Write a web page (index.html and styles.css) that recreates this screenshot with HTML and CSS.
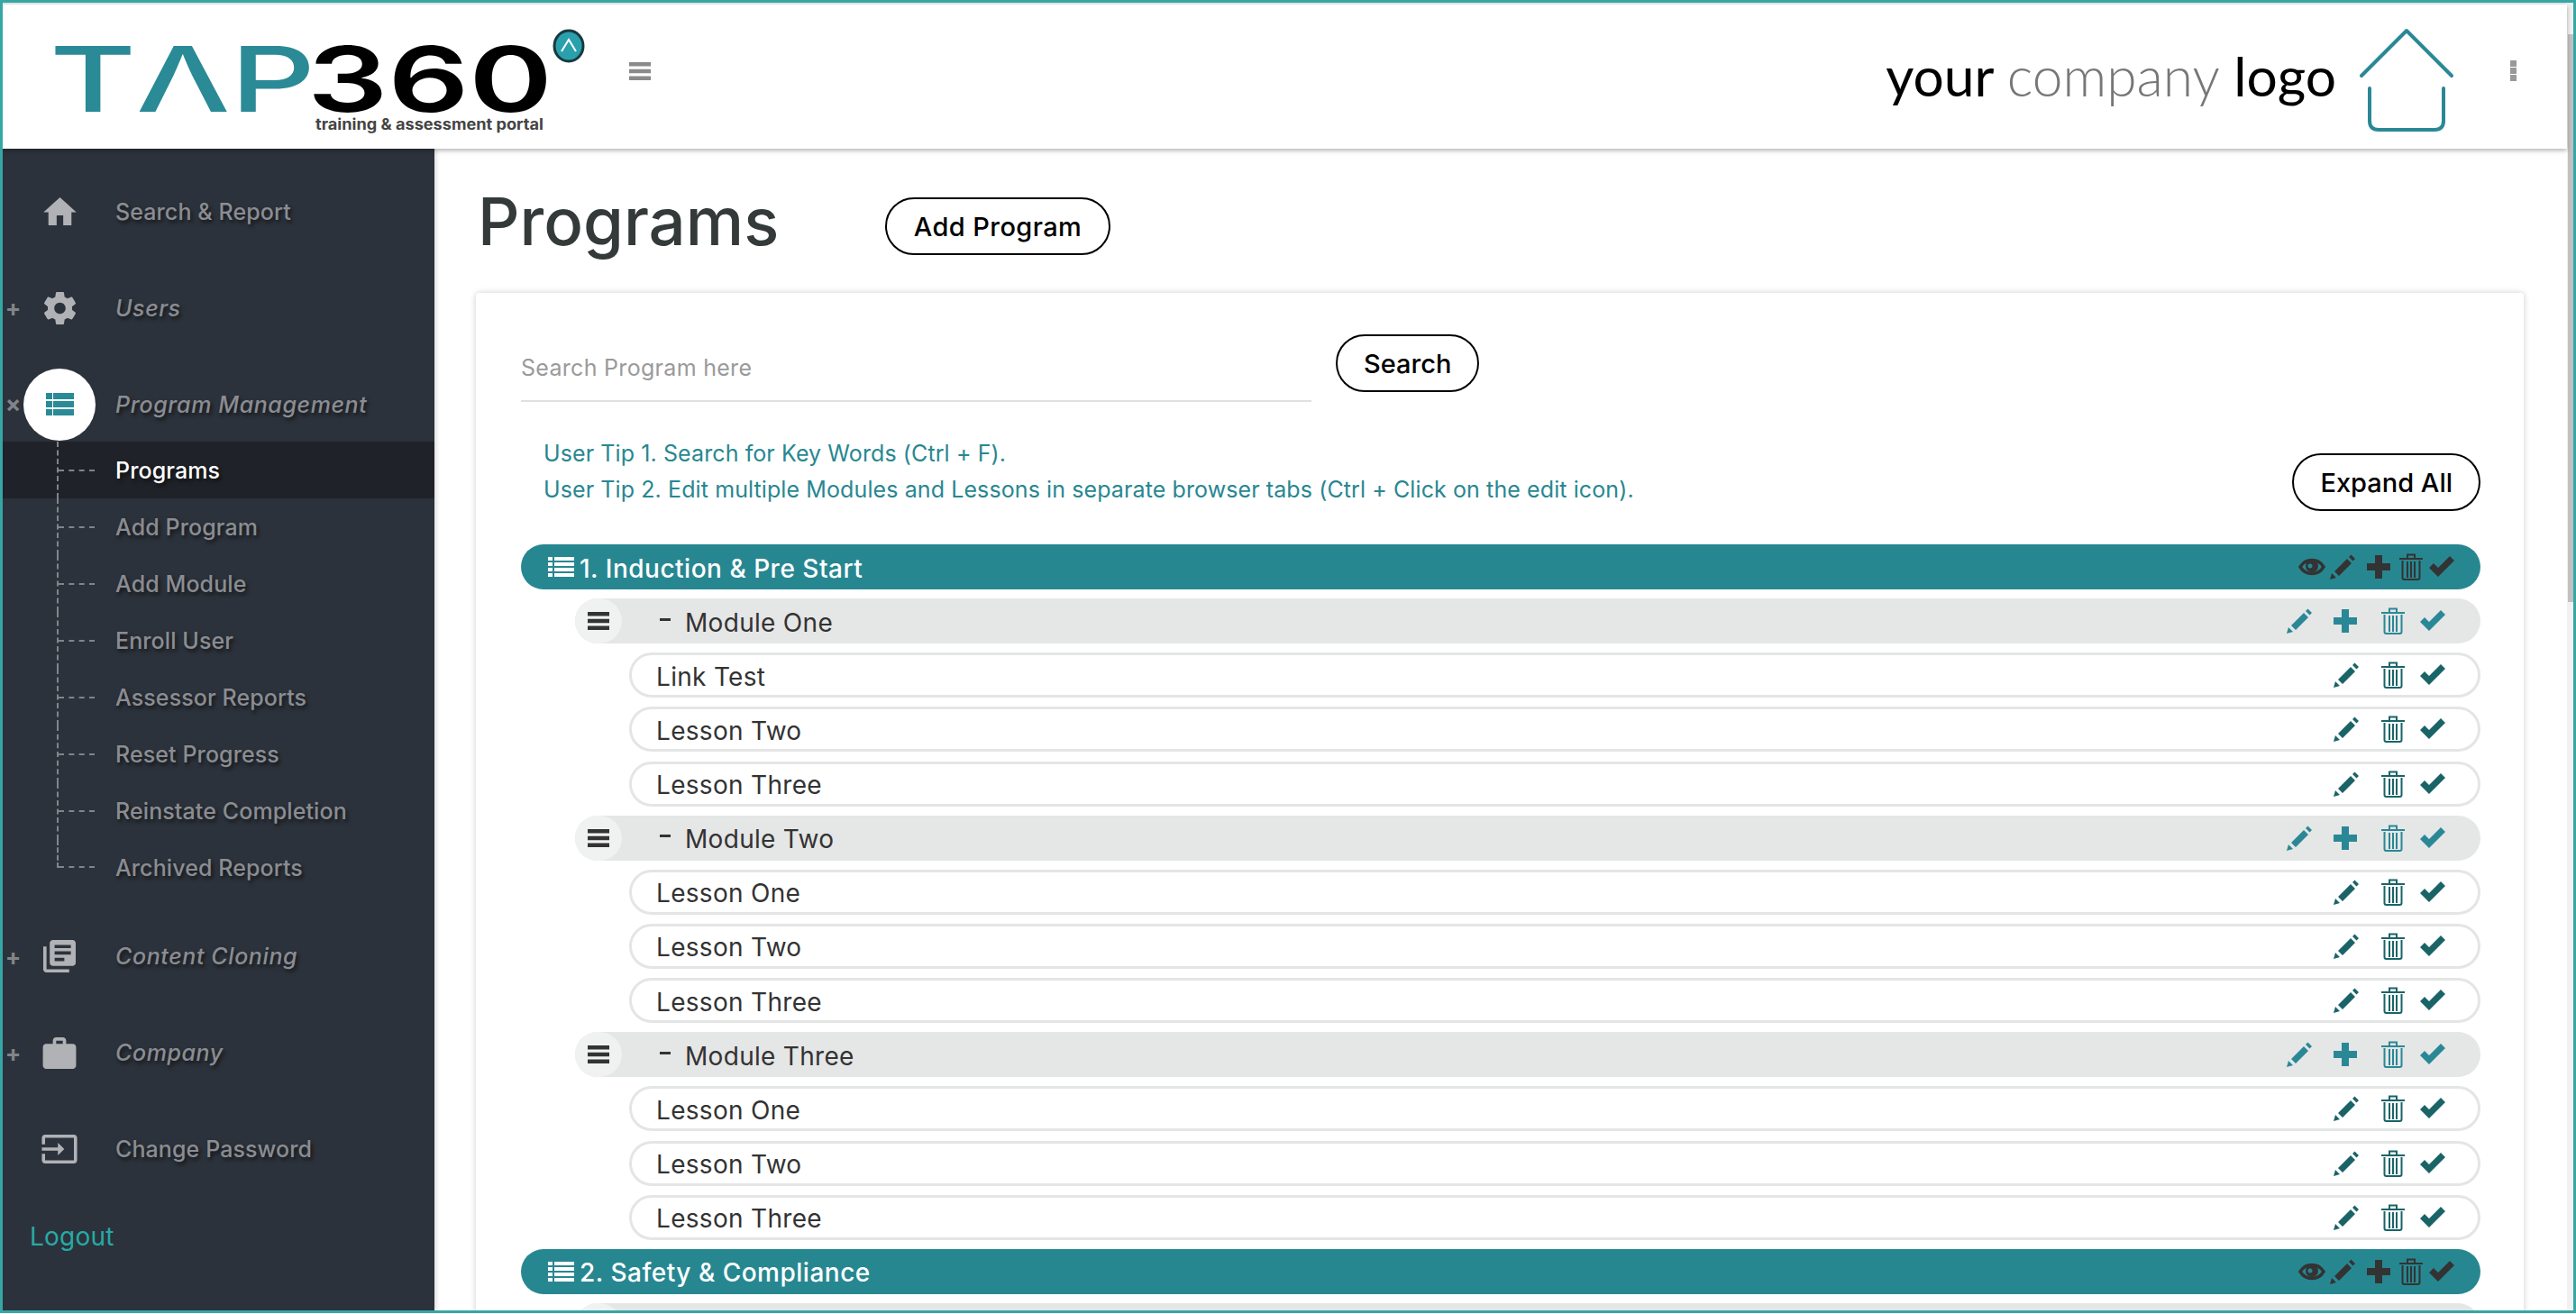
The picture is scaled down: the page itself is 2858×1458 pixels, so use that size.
FILE: index.html
```html
<!DOCTYPE html>
<html>
    <head>
        <title>TAP360 Programs</title>
        <link rel="stylesheet" href="styles.css">
    </head>
    <body>
        <!-- Shared icons -->
        <svg class="icon-defs" width="0" height="0">
            <symbol id="i-trash" viewBox="0 0 26 30">
                <path d="M9 5V1.5h8V5M0 6h26M3.5 8v19a2 2 0 0 0 2 2h15a2 2 0 0 0 2-2V8M9 9v18M13 9v18M17 9v18" fill="none" stroke="currentColor" stroke-width="2"/>
            </symbol>
            <symbol id="i-pencil" viewBox="0 0 28 28">
                <path d="M0 28l2-7 5 5zM5 19L19 5l5 5-14 14zM21 3l2.5-2.5L28 5l-2.500 2.500z" fill="currentColor"/>
            </symbol>
            <symbol id="i-check" viewBox="0 0 28 24">
                <path d="M0 13l5-5 5 5L23 0l5 5-18 18z" fill="currentColor"/>
            </symbol>
            <symbol id="i-plus" viewBox="0 0 26 26">
                <path d="M9 0h8v9h9v8h-9v9H9v-9H0V9h9z" fill="currentColor"/>
            </symbol>
            <symbol id="i-eye" viewBox="0 0 30 24">
                <path d="M2 12C8 2 22 2 28 12C22 22 8 22 2 12Z" fill="none" stroke="currentColor" stroke-width="3.500"/>
                <circle cx="15" cy="11" r="7" fill="currentColor"/>
                <circle cx="13" cy="11" r="2.500" fill="#278791"/>
            </symbol>
            <symbol id="i-list" viewBox="0 0 29 22">
                <path d="M0 0h5v4H0zM7 0h22v4H7zM0 6h5v4H0zM7 6h22v4H7zM0 12h5v4H0zM7 12h22v4H7zM0 18h5v4H0zM7 18h22v4H7z" fill="currentColor"/>
            </symbol>
            <symbol id="i-bars" viewBox="0 0 24 20">
                <path d="M0 0h24v4.500H0zM0 7.700h24v4.500H0zM0 15.500h24V20H0z" fill="currentColor"/>
            </symbol>
        </svg>

        <div class="frame">
            <div class="page">
                <header class="topbar">
                    <svg class="logo" width="607" height="144" viewBox="0 0 607 144">
                        <text class="logo-tap" x="2" y="111" textLength="295" lengthAdjust="spacingAndGlyphs">TΛP</text>
                        <text class="logo-num" x="288" y="111" textLength="272" lengthAdjust="spacingAndGlyphs">360</text>
                        <text class="logo-tag" x="297" y="131" textLength="253" lengthAdjust="spacingAndGlyphs">training &amp; assessment portal</text>
                        <ellipse cx="578" cy="38" rx="16" ry="17" fill="#2ba0ad" stroke="#17393f" stroke-width="3"/>
                        <path d="M570 44l8-13 8 13" fill="none" stroke="#fff" stroke-width="2"/>
                    </svg>
                    <button class="menu-toggle" aria-label="Menu">
                        <svg width="24" height="20"><use href="#i-bars"/></svg>
                    </button>
                    <div class="company-logo">
                        <span class="company-text">your <span class="company-mid">company</span> logo</span>
                        <svg width="108" height="120" viewBox="0 0 108 120">
                            <path d="M4 54L54 4l50 50M13 68v36q0 10 10 10h62q10 0 10-10V68" fill="none" stroke="#2a8896" stroke-width="4" stroke-linecap="round" stroke-linejoin="round"/>
                        </svg>
                    </div>
                    <div class="kebab"><i></i><i></i><i></i></div>
                </header>

                <div class="workspace">
                    <nav class="sidebar">
                        <a class="nav-item">
                            <span class="nav-toggle"></span>
                            <span class="nav-icon"><svg width="37" height="31" viewBox="2 3 20 17"><path d="M10 20v-6h4v6h5v-8h3L12 3 2 12h3v8z" fill="currentColor"/></svg></span>
                            <span class="nav-label">Search &amp; Report</span>
                        </a>
                        <a class="nav-item group">
                            <span class="nav-toggle">+</span>
                            <span class="nav-icon"><svg width="37" height="36" viewBox="2.300 2 19.400 20"><path d="M19.430 12.980c.04-.32.07-.64.07-.98s-.03-.66-.07-.98l2.110-1.650c.19-.15.24-.42.12-.64l-2-3.460c-.12-.22-.39-.3-.61-.22l-2.490 1c-.52-.4-1.080-.73-1.690-.98l-.38-2.650C14.460 2.180 14.250 2 14 2h-4c-.25 0-.46.18-.49.42l-.38 2.650c-.61.25-1.170.59-1.690.98l-2.490-1c-.23-.09-.49 0-.61.22l-2 3.460c-.13.22-.07.49.12.64l2.110 1.650c-.04.32-.07.65-.07.98s.03.66.07.98l-2.110 1.650c-.19.15-.24.42-.12.64l2 3.460c.12.22.39.3.61.22l2.490-1c.52.4 1.080.73 1.690.98l.38 2.650c.03.24.24.42.49.42h4c.25 0 .46-.18.49-.42l.38-2.650c.61-.25 1.170-.59 1.690-.98l2.490 1c.23.09.49 0 .61-.22l2-3.460c.12-.22.07-.49-.12-.64l-2.110-1.650zM12 15.500c-1.930 0-3.500-1.570-3.500-3.500s1.570-3.500 3.500-3.500 3.500 1.570 3.500 3.500-1.570 3.500-3.500 3.500z" fill="currentColor"/></svg></span>
                            <span class="nav-label">Users</span>
                        </a>
                        <a class="nav-item group open">
                            <span class="nav-toggle">×</span>
                            <span class="nav-icon"><svg width="31" height="25" viewBox="0 0 31 25"><path d="M0 0h7v7H0zM8 0h23v7H8zM0 9h7v7H0zM8 9h23v7H8zM0 18h7v7H0zM8 18h23v7H8z" fill="currentColor"/></svg></span>
                            <span class="nav-label">Program Management</span>
                        </a>
                        <div class="submenu">
                            <a class="sub-item active"><span class="branch"></span>Programs</a>
                            <a class="sub-item"><span class="branch"></span>Add Program</a>
                            <a class="sub-item"><span class="branch"></span>Add Module</a>
                            <a class="sub-item"><span class="branch"></span>Enroll User</a>
                            <a class="sub-item"><span class="branch"></span>Assessor Reports</a>
                            <a class="sub-item"><span class="branch"></span>Reset Progress</a>
                            <a class="sub-item"><span class="branch"></span>Reinstate Completion</a>
                            <a class="sub-item last"><span class="branch"></span>Archived Reports</a>
                        </div>
                        <a class="nav-item group">
                            <span class="nav-toggle">+</span>
                            <span class="nav-icon"><svg width="38" height="36" viewBox="2 2 20 20"><path d="M4 6H2v14c0 1.100.9 2 2 2h14v-2H4V6zm16-4H8c-1.100 0-2 .9-2 2v12c0 1.100.9 2 2 2h12c1.100 0 2-.9 2-2V4c0-1.100-.9-2-2-2zm-1 9H9V9h10v2zm-4 4H9v-2h6v2zm4-8H9V5h10v2z" fill="currentColor"/></svg></span>
                            <span class="nav-label">Content Cloning</span>
                        </a>
                        <a class="nav-item group">
                            <span class="nav-toggle">+</span>
                            <span class="nav-icon"><svg width="38" height="35" viewBox="2 2 20 19"><path d="M20 6h-4V4c0-1.110-.89-2-2-2h-4c-1.110 0-2 .89-2 2v2H4c-1.110 0-1.990.89-1.990 2L2 19c0 1.110.89 2 2 2h16c1.110 0 2-.89 2-2V8c0-1.110-.89-2-2-2zm-6 0h-4V4h4v2z" fill="currentColor"/></svg></span>
                            <span class="nav-label">Company</span>
                        </a>
                        <a class="nav-item">
                            <span class="nav-toggle"></span>
                            <span class="nav-icon"><svg width="40" height="32" viewBox="1 3 22 18"><path d="M21 3.010H3c-1.100 0-2 .9-2 2V9h2V4.990h18v14.030H3V15H1v4.010c0 1.100.9 1.980 2 1.980h18c1.100 0 2-.88 2-1.980v-14c0-1.110-.9-2-2-2zM11 16l4-4-4-4v3H1v2h10v3z" fill="currentColor"/></svg></span>
                            <span class="nav-label">Change Password</span>
                        </a>
                        <a class="logout">Logout</a>
                    </nav>

                    <main class="content">
                        <div class="title-row">
                            <h1>Programs</h1>
                            <button class="pill add-program">Add Program</button>
                        </div>

                        <section class="card">
                            <div class="search-row">
                                <input class="search-input" type="text" placeholder="Search Program here">
                                <button class="pill">Search</button>
                            </div>

                            <div class="tips-row">
                                <div class="tips">
                                    <p>User Tip 1. Search for Key Words (Ctrl + F).</p>
                                    <p>User Tip 2. Edit multiple Modules and Lessons in separate browser tabs (Ctrl + Click on the edit icon).</p>
                                </div>
                                <button class="pill expand">Expand All</button>
                            </div>

                            <div class="row program">
                                <svg class="list-icon" width="29" height="22"><use href="#i-list"/></svg>
                                <span class="label">1. Induction &amp; Pre Start</span>
                                <div class="actions">
                                    <svg width="30" height="24"><use href="#i-eye"/></svg>
                                    <svg width="28" height="28"><use href="#i-pencil"/></svg>
                                    <svg width="26" height="26"><use href="#i-plus"/></svg>
                                    <svg width="26" height="30"><use href="#i-trash"/></svg>
                                    <svg width="28" height="24"><use href="#i-check"/></svg>
                                </div>
                            </div>

                            <div class="row module">
                                <span class="handle"><svg width="24" height="20"><use href="#i-bars"/></svg></span>
                                <span class="dash"></span>
                                <span class="label">Module One</span>
                                <div class="actions">
                                    <svg width="28" height="28"><use href="#i-pencil"/></svg>
                                    <svg width="26" height="26"><use href="#i-plus"/></svg>
                                    <svg width="26" height="30"><use href="#i-trash"/></svg>
                                    <svg width="28" height="24"><use href="#i-check"/></svg>
                                </div>
                            </div>
                            <div class="row lesson">
                                <span class="label">Link Test</span>
                                <div class="actions">
                                    <svg width="28" height="28"><use href="#i-pencil"/></svg>
                                    <svg width="26" height="30"><use href="#i-trash"/></svg>
                                    <svg width="28" height="24"><use href="#i-check"/></svg>
                                </div>
                            </div>
                            <div class="row lesson">
                                <span class="label">Lesson Two</span>
                                <div class="actions">
                                    <svg width="28" height="28"><use href="#i-pencil"/></svg>
                                    <svg width="26" height="30"><use href="#i-trash"/></svg>
                                    <svg width="28" height="24"><use href="#i-check"/></svg>
                                </div>
                            </div>
                            <div class="row lesson">
                                <span class="label">Lesson Three</span>
                                <div class="actions">
                                    <svg width="28" height="28"><use href="#i-pencil"/></svg>
                                    <svg width="26" height="30"><use href="#i-trash"/></svg>
                                    <svg width="28" height="24"><use href="#i-check"/></svg>
                                </div>
                            </div>

                            <div class="row module">
                                <span class="handle"><svg width="24" height="20"><use href="#i-bars"/></svg></span>
                                <span class="dash"></span>
                                <span class="label">Module Two</span>
                                <div class="actions">
                                    <svg width="28" height="28"><use href="#i-pencil"/></svg>
                                    <svg width="26" height="26"><use href="#i-plus"/></svg>
                                    <svg width="26" height="30"><use href="#i-trash"/></svg>
                                    <svg width="28" height="24"><use href="#i-check"/></svg>
                                </div>
                            </div>
                            <div class="row lesson">
                                <span class="label">Lesson One</span>
                                <div class="actions">
                                    <svg width="28" height="28"><use href="#i-pencil"/></svg>
                                    <svg width="26" height="30"><use href="#i-trash"/></svg>
                                    <svg width="28" height="24"><use href="#i-check"/></svg>
                                </div>
                            </div>
                            <div class="row lesson">
                                <span class="label">Lesson Two</span>
                                <div class="actions">
                                    <svg width="28" height="28"><use href="#i-pencil"/></svg>
                                    <svg width="26" height="30"><use href="#i-trash"/></svg>
                                    <svg width="28" height="24"><use href="#i-check"/></svg>
                                </div>
                            </div>
                            <div class="row lesson">
                                <span class="label">Lesson Three</span>
                                <div class="actions">
                                    <svg width="28" height="28"><use href="#i-pencil"/></svg>
                                    <svg width="26" height="30"><use href="#i-trash"/></svg>
                                    <svg width="28" height="24"><use href="#i-check"/></svg>
                                </div>
                            </div>

                            <div class="row module">
                                <span class="handle"><svg width="24" height="20"><use href="#i-bars"/></svg></span>
                                <span class="dash"></span>
                                <span class="label">Module Three</span>
                                <div class="actions">
                                    <svg width="28" height="28"><use href="#i-pencil"/></svg>
                                    <svg width="26" height="26"><use href="#i-plus"/></svg>
                                    <svg width="26" height="30"><use href="#i-trash"/></svg>
                                    <svg width="28" height="24"><use href="#i-check"/></svg>
                                </div>
                            </div>
                            <div class="row lesson">
                                <span class="label">Lesson One</span>
                                <div class="actions">
                                    <svg width="28" height="28"><use href="#i-pencil"/></svg>
                                    <svg width="26" height="30"><use href="#i-trash"/></svg>
                                    <svg width="28" height="24"><use href="#i-check"/></svg>
                                </div>
                            </div>
                            <div class="row lesson">
                                <span class="label">Lesson Two</span>
                                <div class="actions">
                                    <svg width="28" height="28"><use href="#i-pencil"/></svg>
                                    <svg width="26" height="30"><use href="#i-trash"/></svg>
                                    <svg width="28" height="24"><use href="#i-check"/></svg>
                                </div>
                            </div>
                            <div class="row lesson">
                                <span class="label">Lesson Three</span>
                                <div class="actions">
                                    <svg width="28" height="28"><use href="#i-pencil"/></svg>
                                    <svg width="26" height="30"><use href="#i-trash"/></svg>
                                    <svg width="28" height="24"><use href="#i-check"/></svg>
                                </div>
                            </div>

                            <div class="row program">
                                <svg class="list-icon" width="29" height="22"><use href="#i-list"/></svg>
                                <span class="label">2. Safety &amp; Compliance</span>
                                <div class="actions">
                                    <svg width="30" height="24"><use href="#i-eye"/></svg>
                                    <svg width="28" height="28"><use href="#i-pencil"/></svg>
                                    <svg width="26" height="26"><use href="#i-plus"/></svg>
                                    <svg width="26" height="30"><use href="#i-trash"/></svg>
                                    <svg width="28" height="24"><use href="#i-check"/></svg>
                                </div>
                            </div>
                            <div class="row module">
                                <span class="handle"></span>
                            </div>
                        </section>
                    </main>
                </div>
            </div>

            <div class="scrollbar"><div class="scroll-thumb"></div></div>
        </div>
    </body>
</html>
```

FILE: styles.css
```css
/* Page frame */
html, body {
    margin: 0;
    height: 100%;
    overflow: hidden;
}

body {
    font-family: 'Inter', 'Noto Sans', sans-serif;
    background-color: rgb(255, 255, 255);
}

.icon-defs {
    display: block;
    height: 0;
}

.frame {
    display: flex;
    box-sizing: border-box;
    height: 1457px;
    border: 3px solid rgb(53, 167, 165);
    overflow: hidden;
}

.page {
    display: flex;
    flex-direction: column;
    flex: 1;
    min-width: 0;
    border-top: 2px solid rgb(232, 234, 232);
}

.scrollbar {
    width: 7px;
    padding: 35px 0 0 1px;
    box-sizing: border-box;
    background-color: rgb(241, 241, 241);
}

.scroll-thumb {
    height: 630px;
    background-color: rgb(193, 193, 193);
}

/* Top bar */
.topbar {
    display: flex;
    align-items: center;
    flex: none;
    height: 160px;
    background-color: rgb(255, 255, 255);
    box-shadow: 0 2px 5px rgba(0, 0, 0, 0.3);
    position: relative;
    z-index: 2;
}

.logo {
    flex: none;
    align-self: flex-start;
    margin: 8px 0 0 50px;
}

.logo-tap {
    font-family: 'Inter', sans-serif;
    font-size: 101px;
    font-weight: 500;
    fill: rgb(42, 138, 150);
}

.logo-num {
    font-family: 'Inter', sans-serif;
    font-size: 101px;
    font-weight: 600;
    fill: rgb(0, 0, 0);
}

.logo-tag {
    font-family: 'Inter', sans-serif;
    font-size: 17px;
    font-weight: 700;
    fill: rgb(68, 68, 68);
}

.menu-toggle {
    display: flex;
    margin: 0 0 12px 38px;
    padding: 0;
    border: 0;
    background: none;
    color: rgb(138, 138, 138);
}

.company-logo {
    display: flex;
    align-items: center;
    gap: 24px;
    margin: 0 0 0 auto;
}

.company-logo svg {
    margin-top: 10px;
}

.company-text {
    margin-bottom: 4px;
    font-family: 'Lato', sans-serif;
    font-size: 60.5px;
    font-weight: 400;
    color: rgb(0, 0, 0);
}

.company-mid {
    color: rgb(119, 119, 119);
    font-weight: 300;
}

.kebab {
    display: flex;
    flex-direction: column;
    gap: 1px;
    margin: 0 56px 14px 61px;
}

.kebab i {
    width: 7px;
    height: 7px;
    background-color: rgb(153, 153, 153);
}

/* Sidebar */
.workspace {
    display: flex;
    flex: 1;
    min-height: 0;
}

.sidebar {
    flex: none;
    width: 479px;
    padding-top: 16px;
    box-sizing: border-box;
    background-color: rgb(44, 50, 59);
    box-shadow: 2px 0 5px rgba(0, 0, 0, 0.15);
    position: relative;
    z-index: 1;
    color: rgb(139, 141, 146);
    text-shadow: 2px 3px 4px rgba(0, 0, 0, 0.6);
}

.nav-item {
    display: flex;
    align-items: center;
    height: 107px;
    font-size: 25px;
    font-weight: 500;
    letter-spacing: 0.1px;
}

.nav-toggle {
    width: 23px;
    text-align: center;
    font-size: 26px;
    font-weight: 700;
    color: rgb(130, 132, 137);
    text-shadow: none;
}

.nav-icon {
    display: flex;
    align-items: center;
    justify-content: center;
    width: 80px;
    height: 80px;
    margin-right: 22px;
    border-radius: 50%;
    color: rgb(177, 178, 182);
}

.nav-item.group .nav-label {
    font-style: italic;
    letter-spacing: 0.6px;
}

.nav-item.open .nav-icon {
    background-color: rgb(255, 255, 255);
    color: rgb(42, 138, 150);
}

.submenu {
    margin: -12px 0 13px;
}

.sub-item {
    display: flex;
    align-items: center;
    height: 63.1px;
    font-size: 25px;
    font-weight: 500;
    letter-spacing: 0.1px;
}

.sub-item.active {
    background-color: rgb(31, 34, 40);
    color: rgb(255, 255, 255);
}

.branch {
    display: flex;
    align-items: center;
    align-self: stretch;
    flex: none;
    box-sizing: border-box;
    width: 42px;
    margin: 0 23px 0 60px;
    border-left: 2px dashed rgb(130, 132, 137);
}

.branch::after {
    content: "";
    flex: 1;
    border-top: 2px dashed rgb(130, 132, 137);
}

.sub-item.last .branch {
    align-items: flex-end;
    align-self: flex-start;
    height: 50%;
}

.logout {
    display: block;
    margin: 26px 0 0 30px;
    font-size: 28px;
    letter-spacing: 0.2px;
    color: rgb(38, 170, 165);
    text-shadow: none;
}

/* Main content */
.content {
    flex: 1;
    min-width: 0;
    padding: 54px 48px 0 46px;
    background-color: rgb(255, 255, 255);
    overflow: hidden;
}

.title-row {
    display: flex;
    align-items: center;
    height: 64px;
    margin-bottom: 42px;
}

h1 {
    width: 452px;
    margin: -12px 0 0 2px;
    font-size: 72.5px;
    font-weight: 500;
    color: rgb(52, 58, 58);
}

.pill {
    height: 64px;
    padding: 0 29px;
    border: 2px solid rgb(0, 0, 0);
    border-radius: 32px;
    background-color: rgb(255, 255, 255);
    color: rgb(0, 0, 0);
    font-family: inherit;
    font-size: 29px;
    font-weight: 500;
}

.add-program {
    width: 250px;
    padding: 0;
    letter-spacing: 0.4px;
}

.card {
    padding: 46px 48px 0 50px;
    background-color: rgb(255, 255, 255);
    border-radius: 4px;
    box-shadow: 0 0 7px rgba(0, 0, 0, 0.2);
}

.search-row {
    display: flex;
    gap: 27px;
    margin-bottom: 37px;
}

.search-input {
    width: 877px;
    height: 75px;
    box-sizing: border-box;
    padding: 0;
    border: 0;
    border-bottom: 2px solid rgb(224, 224, 224);
    outline: 0;
    font-family: inherit;
    font-size: 25px;
    letter-spacing: 0.3px;
}

.search-input::placeholder {
    color: rgb(154, 154, 154);
}

.tips-row {
    display: flex;
    justify-content: space-between;
    height: 84px;
    margin-bottom: 37px;
}

.tips {
    padding: 0 0 0 25px;
    font-size: 25px;
    letter-spacing: 0.1px;
    line-height: 40px;
    color: rgb(40, 135, 145);
}

.tips p {
    margin: 0;
}

.expand {
    margin-top: 20px;
}

/* Program tree rows */
.row {
    display: flex;
    align-items: center;
    box-sizing: border-box;
    height: 50px;
    margin-bottom: 10.15px;
    border-radius: 25px;
    font-size: 28px;
    letter-spacing: 0.3px;
}

.label {
    margin-top: 3px;
}

.actions {
    display: grid;
    align-items: center;
    margin-left: auto;
}

.program {
    padding-left: 30px;
    background-color: rgb(39, 135, 145);
    color: rgb(255, 255, 255);
    font-weight: 500;
    letter-spacing: 0.5px;
}

.list-icon {
    margin-right: 6px;
}

.program .actions {
    grid-template-columns: 35px 41px 36px 33px 28px;
    padding-right: 29px;
    color: rgb(51, 51, 51);
}

.module {
    margin-left: 60px;
    background-color: rgb(229, 230, 230);
    color: rgb(51, 51, 51);
}

.handle {
    display: flex;
    align-items: center;
    justify-content: center;
    width: 52px;
    height: 50px;
    border-radius: 25px;
    background-color: rgb(240, 241, 241);
    color: rgb(51, 51, 51);
}

.dash {
    width: 12px;
    height: 3px;
    margin: 0 16px 4px 42px;
    background-color: rgb(51, 51, 51);
}

.module .actions {
    grid-template-columns: 52px 53px 43px 29px;
    padding-right: 38px;
    color: rgb(42, 136, 150);
}

.lesson {
    margin-left: 120px;
    padding-left: 27px;
    border: 3px solid rgb(228, 229, 229);
    color: rgb(51, 51, 51);
}

.lesson .actions {
    grid-template-columns: 53px 43px 29px;
    padding-right: 35px;
    color: rgb(26, 100, 104);
}
```
